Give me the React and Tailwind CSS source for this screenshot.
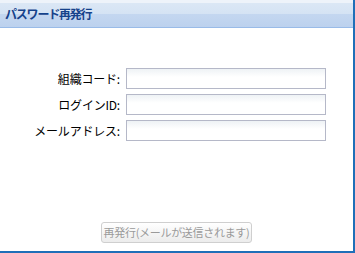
export default function App() {
  const fields = ["組織コード:", "ログインID:", "メールアドレス:"];

  return (
    <div
      className="w-[355px] h-[253px] bg-white border-r-2 border-b-2 border-[#1f6fb8] flex flex-col text-[12px] text-black"
      style={{ fontFamily: '"Noto Sans CJK JP", "Noto Sans", sans-serif' }}
    >
      {/* header */}
      <div className="h-[28px] border-b border-[#99bbe8] bg-[linear-gradient(to_bottom,#eef3fa_0px,#eef3fa_3px,#dbe7f5_3px,#d5e3f4_14px,#c4d7f0_14px,#bcd1ee_27px)] flex items-center pl-[5px]">
        <span className="font-bold text-[12px] leading-none text-[#15428b] tracking-[-1.2px]">
          パスワード再発行
        </span>
      </div>

      {/* form */}
      <div className="pt-[40px] flex flex-col gap-[5px]">
        {fields.map((label) => (
          <div key={label} className="flex items-center">
            <label className="w-[122px] text-right pr-[2px] leading-none tracking-[-0.2px]">
              {label}
            </label>
            <input
              type="text"
              className="ml-[4px] w-[200px] h-[21px] border border-[#b5b8c8] bg-[linear-gradient(to_bottom,#eef2f5_0px,#ffffff_8px)] outline-none"
            />
          </div>
        ))}
      </div>

      <div className="flex-1" />

      <div className="flex justify-center pb-[8px]">
        <button
          disabled
          className="w-[151px] h-[21px] border border-[#cfcfcf] rounded-[3px] bg-[linear-gradient(to_bottom,#ffffff,#ececec)] text-[#9a9a9a] text-[11px] leading-none tracking-[-0.3px] whitespace-nowrap"
        >
          再発行(メールが送信されます)
        </button>
      </div>
    </div>
  );
}
